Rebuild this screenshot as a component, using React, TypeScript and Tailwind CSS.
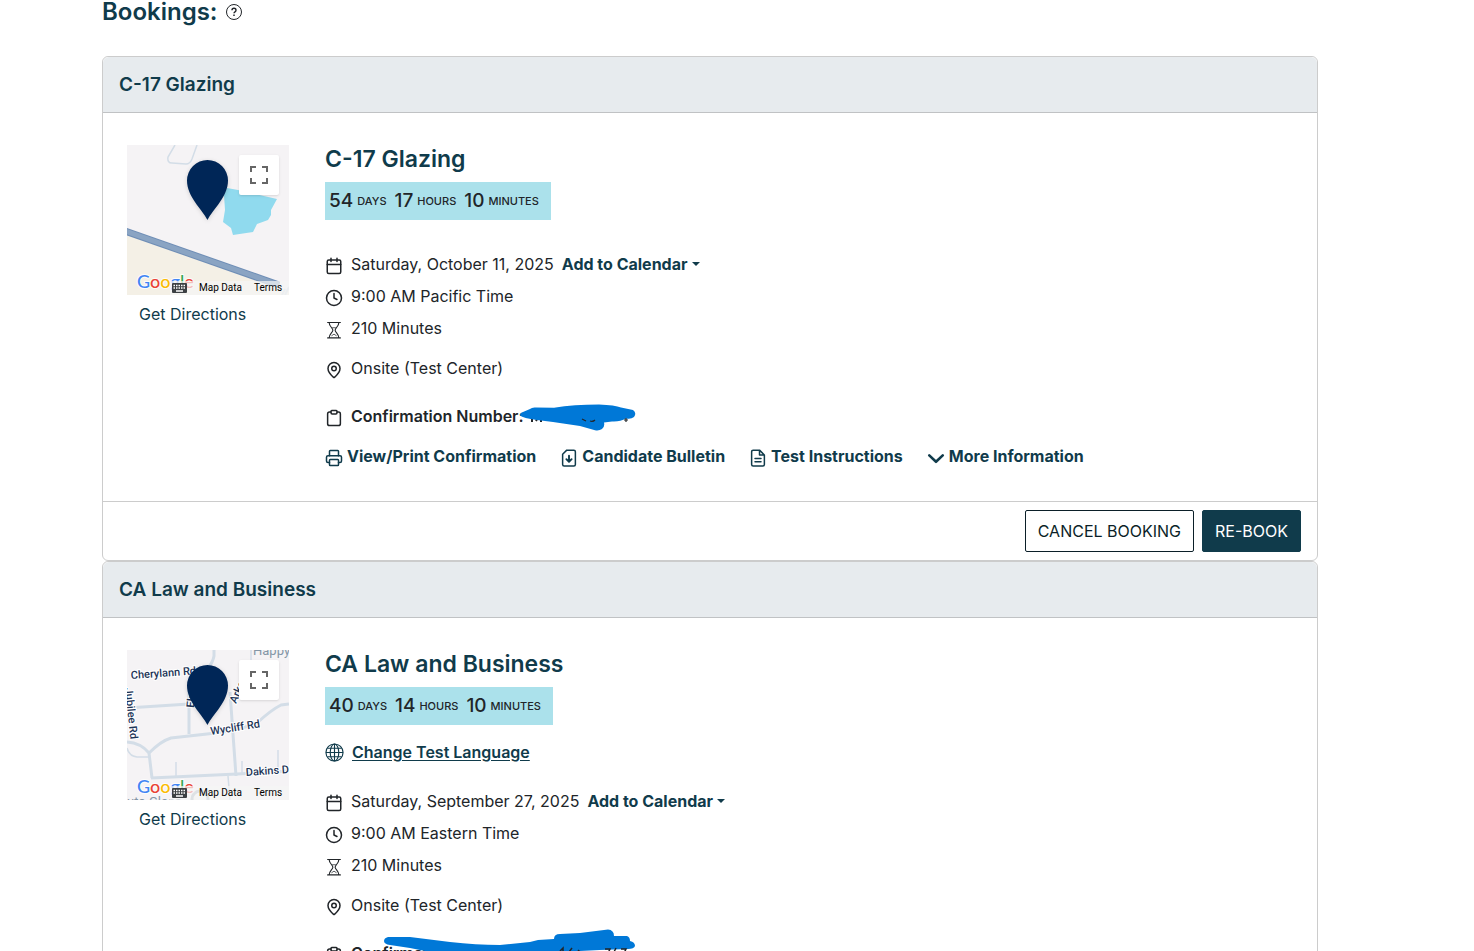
import type { ReactNode } from 'react';
import { Clock, MapPin, Printer } from 'lucide-react';

// ─── Icons ───────────────────────────────────────────────────────────────────

interface StrokeIconProps {
  children: ReactNode;
  width?: number;
}

function StrokeIcon({ children, width = 2 }: StrokeIconProps): React.JSX.Element {
  return (
    <svg
      aria-hidden="true"
      viewBox="0 0 24 24"
      fill="none"
      stroke="currentColor"
      strokeWidth={width}
      strokeLinecap="round"
      strokeLinejoin="round"
      className="size-[18px] shrink-0"
    >
      {children}
    </svg>
  );
}

function CalendarIcon(): React.JSX.Element {
  return (
    <StrokeIcon>
      <rect x="3" y="4" width="18" height="18" rx="2" />
      <path d="M8 1.5V6M16 1.5V6M3 10h18" />
    </StrokeIcon>
  );
}

function HourglassIcon(): React.JSX.Element {
  return (
    <StrokeIcon width={1.5}>
      <path d="M3.500 2h17M3.500 22.500h17M5.500 2c0 5 5 7.500 5 10.200 0 2.800-5 5.300-5 10.300M18.500 2c0 5-5 7.500-5 10.200 0 2.800 5 5.300 5 10.300" />
      <path d="M10 9h4M9 19.500l3-2 3 2" strokeWidth="1" />
    </StrokeIcon>
  );
}

function ClipboardIcon(): React.JSX.Element {
  return (
    <StrokeIcon>
      <path d="M16 4h2a2.500 2.500 0 0 1 2.500 2.500v13A2.500 2.500 0 0 1 18 22H6a2.500 2.500 0 0 1-2.500-2.500v-13A2.500 2.500 0 0 1 6 4h2" />
      <path d="M9 2h6a1 1 0 0 1 1 1v2a1.500 1.500 0 0 1-1.500 1.500h-5A1.500 1.500 0 0 1 8 5V3a1 1 0 0 1 1-1z" />
    </StrokeIcon>
  );
}

function BulletinIcon(): React.JSX.Element {
  return (
    <StrokeIcon>
      <path d="M9 1.500h9.500a2 2 0 0 1 2 2v17a2 2 0 0 1-2 2h-13a2 2 0 0 1-2-2V7z" />
      <path d="M12 9v7.500M8.500 13.500 12 17l3.500-3.500" strokeWidth="2.5" />
    </StrokeIcon>
  );
}

function InstructionsIcon(): React.JSX.Element {
  return (
    <StrokeIcon>
      <path d="M14 1.500H5.500a2 2 0 0 0-2 2v17a2 2 0 0 0 2 2h13a2 2 0 0 0 2-2V8zM14 1.500V8h6.500M8 12.500h8M8 17h8" />
    </StrokeIcon>
  );
}

function ChevronIcon(): React.JSX.Element {
  return (
    <StrokeIcon width={3.5}>
      <path d="m3 8.500 9 8.500 9-8.500" />
    </StrokeIcon>
  );
}

function GlobeIcon(): React.JSX.Element {
  return (
    <svg aria-hidden="true" viewBox="0 0 20 20" fill="none" stroke="currentColor" strokeWidth="1.2" className="size-[19px] shrink-0">
      <circle cx="10" cy="10" r="9" />
      <ellipse cx="10" cy="10" rx="4.5" ry="9" />
      <path d="M10 1v18M1 10h18M2.500 5.500h15M2.500 14.500h15" />
    </svg>
  );
}

// ─── Map ─────────────────────────────────────────────────────────────────────

function LakeMap(): React.JSX.Element {
  return (
    <svg aria-hidden="true" viewBox="0 0 162 150" className="absolute inset-0 size-full">
      <rect width="162" height="150" fill="#f5f3f5" />
      <path d="M0 89 162 146v4H0z" fill="#f4f0e6" />
      <path d="M48 0l-7 12q-1 6 4 6l14 1q4 0 6-5l5-14" fill="none" stroke="#d3dde7" strokeWidth="1.5" />
      <path d="M-2 86 152 140" stroke="#6f8eb6" strokeWidth="7" />
      <path d="M-2 86 152 140" stroke="#8aa4c3" strokeWidth="5" />
      <path
        d="M100 43l11 2 39 9-6 11v5l-3 5-11 4-4 8-20 3-2-7-8-6 2-12-1-15z"
        fill="#90daee"
      />
      <path d="M155 150l3-6M158 150l4-8" stroke="#d3dde7" strokeWidth="2" />
    </svg>
  );
}

function StreetMap(): React.JSX.Element {
  return (
    <svg aria-hidden="true" viewBox="0 0 162 150" className="absolute inset-0 size-full">
      <rect width="162" height="150" fill="#f5f3f5" />
      <g fill="none" stroke="#d3dde7" strokeWidth="3">
        <path d="M0 58 62 54M62 40V84M87 0v6q-1 6-6 12M103 42l6 84M0 92q14 1 22 11l3 25" />
        <path d="M22 103q12-12 22-15l36-4q30-3 50-11 14-13 24-18l8-1" />
        <path d="M24 128l86-4 52-3" />
        <path d="M0 98q2 8 10 9h12" strokeWidth="1.5" />
        <path d="M49 112v14M115 111v13M151 100v20M101 126l2 24M124 0v14" strokeWidth="1.5" />
      </g>
      <circle cx="73" cy="149" r="8" fill="none" stroke="#a9b5bf" strokeWidth="3" />
      <g
        fill="#1d3557"
        stroke="#ffffff"
        strokeWidth="2"
        paintOrder="stroke"
        fontFamily="Roboto, sans-serif"
        fontSize="11"
        fontWeight="500"
      >
        <text x="4" y="29" transform="rotate(-4 4 29)">Cherylann Rd</text>
        <text x="84" y="85" transform="rotate(-9 84 85)">Wycliff Rd</text>
        <text x="119" y="126" transform="rotate(-4 119 126)">Dakins Dr</text>
        <text x="109" y="54" transform="rotate(-66 109 54)">Arkay</text>
        <text x="67" y="58" transform="rotate(-84 67 58)">Elm</text>
        <text x="-2" y="38" transform="rotate(84 -2 38)">Jubilee Rd</text>
      </g>
      <g fill="#8496a6" fontFamily="Roboto, sans-serif" fontSize="13">
        <text x="126" y="5">Happy</text>
        <text x="0" y="156">uto Glass</text>
      </g>
    </svg>
  );
}

function GoogleLogo(): React.JSX.Element {
  return (
    <svg
      role="img"
      aria-label="Google"
      viewBox="0 0 60 24"
      className="absolute bottom-0 left-[9px] h-6 w-[60px]"
    >
      <text
        x="1"
        y="17"
        fontFamily="Lato, sans-serif"
        fontSize="18"
        fontWeight="500"
        stroke="#ffffff"
        strokeWidth="2"
        strokeOpacity="0.8"
        paintOrder="stroke"
      >
        <tspan fill="#4285f4">G</tspan>
        <tspan fill="#ea4335">o</tspan>
        <tspan fill="#fbbc04">o</tspan>
        <tspan fill="#4285f4">g</tspan>
        <tspan fill="#34a853">l</tspan>
        <tspan fill="#ea4335">e</tspan>
      </text>
    </svg>
  );
}

function MapTile({ kind }: { kind: MapKind }): React.JSX.Element {
  return (
    <div className="relative h-[150px] w-[162px] overflow-hidden">
      {kind === 'lake' ? <LakeMap /> : <StreetMap />}
      <svg aria-hidden="true" viewBox="0 0 41 60" className="absolute top-[15px] left-[60px] h-[60px] w-[41px] drop-shadow-sm">
        <path d="M20.500 60C15 49 0 37 0 20.500a20.500 20.500 0 0 1 41 0C41 37 26 49 20.500 60z" fill="#002657" />
      </svg>
      <button
        type="button"
        aria-label="Toggle fullscreen view"
        className="absolute top-[10px] right-[10px] flex size-10 items-center justify-center rounded-xs bg-white text-[#666666] shadow-sm"
      >
        <svg aria-hidden="true" viewBox="0 0 18 18" className="size-[18px]" fill="none" stroke="currentColor" strokeWidth="2">
          <path d="M1 6V1h5M12 1h5v5M17 12v5h-5M6 17H1v-5" />
        </svg>
      </button>
      <GoogleLogo />
      <div className="absolute right-0 bottom-0 flex h-[14px] w-[119px] items-center bg-[#f5f5f5]/70 font-['Roboto',sans-serif] text-[10px] leading-[14px] text-black">
        <button type="button" aria-label="Keyboard shortcuts" className="ml-[2px]">
          <svg aria-hidden="true" viewBox="0 0 15 10" className="h-[10px] w-[15px]">
            <rect width="15" height="10" rx="1" fill="#3c4043" />
            <path d="M1.500 2.500h12M1.500 5h12" stroke="#fff" strokeWidth="1.5" strokeDasharray="1.5 1" />
            <path d="M4 8h7" stroke="#fff" strokeWidth="1.5" />
          </svg>
        </button>
        <button type="button" className="ml-3">Map Data</button>
        <a href="#terms" className="ml-3">Terms</a>
      </div>
    </div>
  );
}

// ─── Redaction marks ─────────────────────────────────────────────────────────

function ShortScribble(): React.JSX.Element {
  return (
    <svg
      aria-hidden="true"
      viewBox="520 404 116 27"
      className="absolute top-1 left-[195px] h-[27px] w-[116px]"
    >
      <path d="M532 422v-3M536 421l1-2M541 422v-3" stroke="#212529" strokeWidth="2" />
      <path
        d="M523 412l7-3q2-2 6-1.500l18 .2q20-3.200 45-3.200 16 .5 22 3l12 2.500q4 3 1 7-3 2.500-8 1.500-6 3.500-14 3l-8 1q1 4-2 6.500-3 2-7 1.200l-15-4.200-27-4-16-2q-14-2-17-4.500 0-3 3-3.500z"
        fill="#0078d7"
      />
      <path d="M582 419l4 2M590 421q3 1 5-1M624 420h4M626 418v4" stroke="#212529" strokeWidth="1.2" fill="none" />
    </svg>
  );
}

function LongScribble(): React.JSX.Element {
  return (
    <svg
      aria-hidden="true"
      viewBox="384 929 252 27"
      className="absolute top-[-8px] left-[59px] h-[27px] w-[252px]"
    >
      <path
        d="M388 937H410L450 942Q476 945 500 945L530 942 538 940 554 939Q554 934 560 934L580 933 608 929.500Q614 930 614 936H627Q630 937 630 941 635 942 635 946 634 949 628 949L600 950 560 952 530 956H450L410 948 390 945Q384 944 384 941 384 938 388 937Z"
        fill="#0078d7"
      />
      <path d="M560 951l3-3v5M569 952l3-4M578 950l2 2M605 949h5l-2 4M614 952l2-4M621 949h5l-2 4" stroke="#212529" strokeWidth="1.5" fill="none" />
    </svg>
  );
}

// ─── Bookings ────────────────────────────────────────────────────────────────

type MapKind = 'lake' | 'streets';

interface Booking {
  title: string;
  countdown: { value: number; unit: string }[];
  date: string;
  time: string;
  duration: string;
  location: string;
  map: MapKind;
  canChangeLanguage: boolean;
}

const BOOKINGS: Booking[] = [
  {
    title: 'C-17 Glazing',
    countdown: [
      { value: 54, unit: 'DAYS' },
      { value: 17, unit: 'HOURS' },
      { value: 10, unit: 'MINUTES' },
    ],
    date: 'Saturday, October 11, 2025',
    time: '9:00 AM Pacific Time',
    duration: '210 Minutes',
    location: 'Onsite (Test Center)',
    map: 'lake',
    canChangeLanguage: false,
  },
  {
    title: 'CA Law and Business',
    countdown: [
      { value: 40, unit: 'DAYS' },
      { value: 14, unit: 'HOURS' },
      { value: 10, unit: 'MINUTES' },
    ],
    date: 'Saturday, September 27, 2025',
    time: '9:00 AM Eastern Time',
    duration: '210 Minutes',
    location: 'Onsite (Test Center)',
    map: 'streets',
    canChangeLanguage: true,
  },
];

function DetailRow({ icon, children }: { icon: ReactNode; children: ReactNode }): React.JSX.Element {
  return (
    <div className="relative flex h-8 items-center gap-2">
      <span className="pt-1">{icon}</span>
      {children}
    </div>
  );
}

function ActionLink({ href, icon, children }: { href: string; icon: ReactNode; children: ReactNode }): React.JSX.Element {
  return (
    <a href={href} className="flex items-center gap-1 font-bold text-[#103b4b]">
      <span className="pt-1">{icon}</span>
      {children}
    </a>
  );
}

function BookingCard({ booking }: { booking: Booking }): React.JSX.Element {
  return (
    <article className="rounded-md border border-[#cccccc] bg-white">
      <header className="rounded-t-md border-b border-[#c0c2c4] bg-[#e7ebee] px-4 py-[14px]">
        <h2 className="text-[19px] leading-[27px] font-semibold text-[#103b4b]">{booking.title}</h2>
      </header>

      <div className="flex gap-9 px-6 pt-8 pb-[29px]">
        <div className="w-[162px] shrink-0">
          <MapTile kind={booking.map} />
          <a href="#directions" className="ml-3 block pt-[7px] leading-6 text-[#103b4b]">
            Get Directions
          </a>
        </div>

        <div className="min-w-0 flex-1">
          <h3 className="mb-2 text-[23px] leading-[29px] font-semibold text-[#103b4b]">{booking.title}</h3>
          <div className="flex h-[38px] w-fit items-center gap-2 bg-[#abe1eb] pr-3 pl-1">
            {booking.countdown.map(({ value, unit }) => (
              <span key={unit} className="flex items-center gap-1">
                <span className="text-[19px] font-medium">{value}</span>
                <span className="text-[11px] font-medium">{unit}</span>
              </span>
            ))}
          </div>

          {booking.canChangeLanguage ? (
            <a
              href="#language"
              className="mt-[11px] mb-[17px] flex h-8 w-fit items-center gap-2 font-semibold text-[#103b4b] underline underline-offset-2"
            >
              <GlobeIcon />
              Change Test Language
            </a>
          ) : (
            <div className="h-7" />
          )}

          <DetailRow icon={<CalendarIcon />}>
            <span>{booking.date}</span>
            <button type="button" className="flex items-center gap-1 font-bold text-[#103b4b]">
              Add to Calendar
              <span className="border-x-4 border-t-4 border-x-transparent border-t-current" />
            </button>
          </DetailRow>
          <DetailRow icon={<Clock size={18} />}>{booking.time}</DetailRow>
          <DetailRow icon={<HourglassIcon />}>{booking.duration}</DetailRow>
          <div className="mt-2">
            <DetailRow icon={<MapPin size={18} />}>{booking.location}</DetailRow>
          </div>
          <div className="mt-4">
            <DetailRow icon={<ClipboardIcon />}>
              <span className="font-semibold">Confirmation Number:</span>
              {booking.map === 'lake' ? <ShortScribble /> : <LongScribble />}
            </DetailRow>
          </div>
          <div className="mt-2 flex h-8 items-center gap-6">
            <ActionLink href="#confirmation" icon={<Printer size={18} />}>View/Print Confirmation</ActionLink>
            <ActionLink href="#bulletin" icon={<BulletinIcon />}>Candidate Bulletin</ActionLink>
            <ActionLink href="#instructions" icon={<InstructionsIcon />}>Test Instructions</ActionLink>
            <ActionLink href="#more" icon={<ChevronIcon />}>More Information</ActionLink>
          </div>
        </div>
      </div>

      <footer className="flex justify-end gap-2 border-t border-[#cccccc] px-4 py-2">
        <button type="button" className="h-[42px] rounded-xs border border-[#0b1f28] px-3 text-[#0b1f28]">
          CANCEL BOOKING
        </button>
        <button type="button" className="h-[42px] rounded-xs border border-[#103b4b] bg-[#103b4b] px-3 text-white">
          RE-BOOK
        </button>
      </footer>
    </article>
  );
}

export default function App(): React.JSX.Element {
  return (
    <main className="h-screen overflow-hidden bg-white pr-[156px] pl-[102px] font-['Inter',sans-serif] text-[16px] leading-6 text-[#212529]">
      <div className="mb-8 flex h-6 items-center gap-2">
        <h1 className="text-[24px] leading-6 font-semibold text-[#103b4b]">Bookings:</h1>
        <button type="button" aria-label="Help">
          <svg aria-hidden="true" viewBox="0 0 16 16" className="size-4" fill="none" stroke="currentColor">
            <circle cx="8" cy="8" r="7.500" />
            <path d="M6 6.300q0-2 2-2t2 1.900q0 1-1 1.600t-1 1.500" strokeWidth="1.400" />
            <path d="M8 10.500v1.500" strokeWidth="1.500" />
          </svg>
        </button>
      </div>
      {BOOKINGS.map((booking) => (
        <BookingCard key={booking.title} booking={booking} />
      ))}
    </main>
  );
}
